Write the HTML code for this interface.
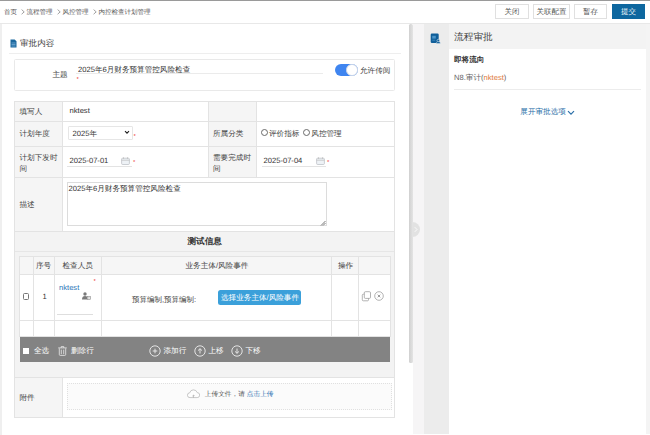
<!DOCTYPE html>
<html><head><meta charset="utf-8">
<style>
*{box-sizing:border-box;margin:0;padding:0}
html,body{width:650px;height:435px;overflow:hidden;background:#fff;font-family:"Liberation Sans",sans-serif;color:#333;text-rendering:geometricPrecision}
.a{position:absolute}
.t{position:absolute;white-space:nowrap;line-height:1}
</style></head><body>
<!-- top line -->
<div class="a" style="left:0;top:0;width:650px;height:1px;background:#9a9a9a"></div>
<!-- header -->
<div class="a" style="left:0;top:1px;width:650px;height:23px;background:#fff;border-bottom:1px solid #e8e8e8"></div>
<div class="t" style="left:4px;top:9.6px;font-size:6.5px;color:#555">首页</div>
<svg class="a" style="left:20.5px;top:9px" width="4" height="6" viewBox="0 0 4 6"><path d="M0.6 0.6L3.2 2.9L0.6 5.2" stroke="#8a8a8a" stroke-width="0.8" fill="none"/></svg>
<div class="t" style="left:26.5px;top:9.6px;font-size:6.5px;color:#555">流程管理</div>
<svg class="a" style="left:56.5px;top:9px" width="4" height="6" viewBox="0 0 4 6"><path d="M0.6 0.6L3.2 2.9L0.6 5.2" stroke="#8a8a8a" stroke-width="0.8" fill="none"/></svg>
<div class="t" style="left:62.5px;top:9.6px;font-size:6.5px;color:#555">风控管理</div>
<svg class="a" style="left:92.5px;top:9px" width="4" height="6" viewBox="0 0 4 6"><path d="M0.6 0.6L3.2 2.9L0.6 5.2" stroke="#8a8a8a" stroke-width="0.8" fill="none"/></svg>
<div class="t" style="left:98.5px;top:9.6px;font-size:6.5px;color:#555">内控检查计划管理</div>
<div class="a btn" style="left:495px;top:4px;width:34px;height:15px;border:1px solid #e0e0e0;font-size:7.5px;color:#555;text-align:center;line-height:13px">关闭</div>
<div class="a btn" style="left:533px;top:4px;width:37px;height:15px;border:1px solid #e0e0e0;font-size:7.5px;color:#555;text-align:center;line-height:13px">关联配置</div>
<div class="a btn" style="left:574px;top:4px;width:33px;height:15px;border:1px solid #e0e0e0;font-size:7.5px;color:#555;text-align:center;line-height:13px">暂存</div>
<div class="a btn" style="left:612px;top:4px;width:33px;height:15px;background:#0e679f;font-size:7.5px;color:#fff;text-align:center;line-height:15px">提交</div>

<!-- left strip -->
<div class="a" style="left:0;top:24px;width:1.6px;height:411px;background:#efefef"></div>
<!-- scrollbar area -->
<div class="a" style="left:409px;top:24px;width:3.5px;height:339px;border-radius:1.5px;background:linear-gradient(90deg,#d0d0d0,#e4e4e4)"></div>
<div class="a" style="left:412.8px;top:24px;width:11.2px;height:410px;background:#f6f5f6"></div>
<div class="a" style="left:424px;top:24px;width:25px;height:410px;background:#ececec"></div>
<div class="a" style="left:646px;top:24px;width:4px;height:410px;background:#f4f4f4"></div>

<!-- section title -->
<svg class="a" style="left:10px;top:38.5px" width="7" height="9" viewBox="0 0 7 9"><path d="M0.5 0.5h4.2l1.8 1.8v6.2h-6z" fill="#1b689e"/><path d="M1.5 4h4M1.5 5.5h4M1.5 7h4" stroke="#7fb6dc" stroke-width="0.7"/></svg>
<div class="t" style="left:20px;top:38.5px;font-size:8.6px;color:#444">审批内容</div>
<div class="a" style="left:9px;top:53px;width:392px;height:1px;background:#eeeeee"></div>

<!-- subject box -->
<div class="a" style="left:14px;top:59px;width:381px;height:32px;border:1px solid #e9e9e9;border-radius:1.5px"></div>
<div class="t" style="left:52.5px;top:70.5px;font-size:7.6px;color:#444">主题</div>
<div class="t" style="left:78px;top:65.7px;font-size:7.6px;color:#333">2025年6月财务预算管控风险检查</div>
<div class="a" style="left:75.5px;top:73px;width:247px;height:1px;background:#ebebeb"></div>
<div class="t" style="left:76.5px;top:77px;font-size:6px;color:#e33">*</div>
<div class="a" style="left:335px;top:64px;width:23px;height:12px;border-radius:6px;background:#3f85f0"></div>
<div class="a" style="left:346px;top:64.3px;width:11.5px;height:11.5px;border-radius:50%;background:#fff;border:0.5px solid #cfd8e8"></div>
<div class="t" style="left:360px;top:66.8px;font-size:7.6px;color:#444">允许传阅</div>

<!-- main table -->
<div class="a" style="left:14px;top:101px;width:381px;height:317px;border:1px solid #e3e3e3;background:#fff"></div>
<div class="a" style="left:15px;top:102px;width:47.5px;height:129px;background:#f5f5f5"></div>
<div class="a" style="left:208px;top:102px;width:48.5px;height:75px;background:#f5f5f5"></div>
<div class="a" style="left:62px;top:101px;width:1px;height:130px;background:#e3e3e3"></div>
<div class="a" style="left:208px;top:101px;width:1px;height:76px;background:#e3e3e3"></div>
<div class="a" style="left:256px;top:101px;width:1px;height:76px;background:#e3e3e3"></div>
<div class="a" style="left:14px;top:121px;width:381px;height:1px;background:#e3e3e3"></div>
<div class="a" style="left:14px;top:145.5px;width:381px;height:1px;background:#e3e3e3"></div>
<div class="a" style="left:14px;top:177px;width:381px;height:1px;background:#e3e3e3"></div>
<div class="a" style="left:14px;top:230.5px;width:381px;height:1px;background:#e3e3e3"></div>
<div class="t" style="left:19.5px;top:107.6px;font-size:7.6px;color:#444">填写人</div>
<div class="t" style="left:69.5px;top:107px;font-size:7.6px;color:#333">nktest</div>
<div class="t" style="left:19.5px;top:130.3px;font-size:7.6px;color:#444">计划年度</div>
<div class="a" style="left:67.5px;top:126.2px;width:65px;height:13.4px;border:1px solid #e6e6e6;border-radius:1px"></div>
<div class="t" style="left:72.5px;top:129.5px;font-size:7.6px;color:#333">2025年</div>
<svg class="a" style="left:123.5px;top:130px" width="6" height="5" viewBox="0 0 6 5"><path d="M1 1.2L3 3.2L5 1.2" stroke="#222" stroke-width="1.1" fill="none"/></svg>
<div class="t" style="left:133.5px;top:133.5px;font-size:6px;color:#e33">*</div>
<div class="t" style="left:213px;top:129.7px;font-size:7.6px;color:#444">所属分类</div>
<div class="a" style="left:261px;top:128.8px;width:7px;height:7px;border:0.7px solid #6a6a6a;border-radius:50%"></div>
<div class="t" style="left:269px;top:129.7px;font-size:7.6px;color:#444">评价指标</div>
<div class="a" style="left:303px;top:128.8px;width:7px;height:7px;border:0.7px solid #6a6a6a;border-radius:50%"></div>
<div class="t" style="left:311.3px;top:129.7px;font-size:7.6px;color:#444">风控管理</div>

<div class="t" style="left:19.5px;top:151.5px;font-size:7.6px;color:#444;line-height:11px;white-space:normal;width:42px">计划下发时间</div>
<div class="t" style="left:69.5px;top:156.5px;font-size:7.6px;color:#333">2025-07-01</div>
<div class="a" style="left:67px;top:165.5px;width:65px;height:1px;background:#e3e3e3"></div>
<div class="t" style="left:133px;top:160px;font-size:6px;color:#e33">*</div>
<div class="t" style="left:213px;top:151.5px;font-size:7.6px;color:#444;line-height:11px;white-space:normal;width:42px">需要完成时间</div>
<div class="t" style="left:263.5px;top:156.5px;font-size:7.6px;color:#333">2025-07-04</div>
<div class="a" style="left:261.5px;top:165.5px;width:64.5px;height:1px;background:#e3e3e3"></div>
<div class="t" style="left:327px;top:160px;font-size:6px;color:#e33">*</div>

<div class="t" style="left:19.5px;top:201px;font-size:7.6px;color:#444">描述</div>
<div class="a" style="left:67px;top:182.3px;width:260px;height:44px;border:1px solid #dcdcdc"></div>
<div class="t" style="left:68.5px;top:185px;font-size:7.6px;color:#333">2025年6月财务预算管控风险检查</div>


<svg class="a" style="left:121px;top:157px" width="9" height="8" viewBox="0 0 9 8"><rect x="0.6" y="1.2" width="7.8" height="6.3" rx="1" fill="#eef2f6" stroke="#b8bcc2" stroke-width="0.7"/><path d="M0.6 3.2h7.8M2.5 0.2v1.8M6.5 0.2v1.8" stroke="#bbb" stroke-width="0.7"/></svg>
<svg class="a" style="left:315.5px;top:157px" width="9" height="8" viewBox="0 0 9 8"><rect x="0.6" y="1.2" width="7.8" height="6.3" rx="1" fill="#eef2f6" stroke="#b8bcc2" stroke-width="0.7"/><path d="M0.6 3.2h7.8M2.5 0.2v1.8M6.5 0.2v1.8" stroke="#bbb" stroke-width="0.7"/></svg>
<svg class="a" style="left:320px;top:220px" width="6" height="6" viewBox="0 0 6 6"><path d="M1 5.5L5.5 1M3 5.5L5.5 3" stroke="#555" stroke-width="0.8"/></svg>
<!-- test info section -->
<div class="a" style="left:15px;top:231.5px;width:379px;height:146px;background:#f3f3f3"></div>
<div class="a" style="left:15px;top:251px;width:379px;height:1px;background:#e6e6e6"></div>
<div class="t" style="left:187.5px;top:237px;font-size:8.6px;color:#333;font-weight:bold">测试信息</div>
<div class="a" style="left:14px;top:377px;width:381px;height:1px;background:#e3e3e3"></div>

<!-- inner table -->
<div class="a" style="left:19px;top:256px;width:371.5px;height:81px;background:#fff;border:1px solid #e3e3e3"></div>
<div class="a" style="left:20px;top:257px;width:369.5px;height:17.3px;background:#f6f6f6"></div>
<div class="a" style="left:19px;top:274px;width:371.5px;height:1px;background:#e3e3e3"></div>
<div class="a" style="left:19px;top:320px;width:371.5px;height:1px;background:#e3e3e3"></div>
<div class="a" style="left:33px;top:256px;width:1px;height:81px;background:#e3e3e3"></div>
<div class="a" style="left:54px;top:256px;width:1px;height:81px;background:#e3e3e3"></div>
<div class="a" style="left:101px;top:256px;width:1px;height:81px;background:#e3e3e3"></div>
<div class="a" style="left:331px;top:256px;width:1px;height:81px;background:#e3e3e3"></div>
<div class="a" style="left:358px;top:256px;width:1px;height:81px;background:#e3e3e3"></div>
<div class="t" style="left:36px;top:262px;font-size:7.6px;color:#444">序号</div>
<div class="t" style="left:62.5px;top:262px;font-size:7.6px;color:#444">检查人员</div>
<div class="t" style="left:185.5px;top:262px;font-size:7.6px;color:#444">业务主体/风险事件</div>
<div class="t" style="left:338px;top:262px;font-size:7.6px;color:#444">操作</div>
<div class="a" style="left:22.5px;top:293px;width:6.5px;height:7px;border:0.8px solid #777;border-radius:1.5px;background:#fff"></div>
<div class="t" style="left:42.5px;top:293px;font-size:7.6px;color:#333">1</div>
<div class="t" style="left:59px;top:283.8px;font-size:7.6px;color:#2b75b8">nktest</div>
<div class="t" style="left:93.5px;top:278.5px;font-size:6px;color:#e33">*</div>
<svg class="a" style="left:82px;top:292px" width="9" height="8" viewBox="0 0 9 8"><circle cx="3" cy="2" r="1.7" fill="#7a7a7a"/><path d="M0 7.5c0-2.5 1.2-3.6 3-3.6s3 1.1 3 3.6z" fill="#7a7a7a"/><rect x="5.2" y="4.3" width="3.3" height="3.2" fill="#fff" stroke="#888" stroke-width="0.6"/><path d="M6.85 4.3v3.2M5.2 5.9h3.3" stroke="#aaa" stroke-width="0.4"/></svg>
<div class="a" style="left:57px;top:313.5px;width:36px;height:1px;background:#dedede"></div>
<div class="t" style="left:132px;top:295.5px;font-size:7.5px;color:#444">预算编制,预算编制:</div>
<div class="a" style="left:218.3px;top:290px;width:82.5px;height:15px;border-radius:2.5px;background:#3ba0da"></div>
<div class="t" style="left:221px;top:293.5px;font-size:7.6px;color:#fff">选择业务主体/风险事件</div>
<svg class="a" style="left:361px;top:290.5px" width="11" height="11" viewBox="0 0 11 11"><rect x="3.3" y="0.7" width="6.2" height="6.7" rx="1.1" fill="none" stroke="#9a9a9a" stroke-width="0.75"/><path d="M3.3 3.2H2.3a1 1 0 0 0-1 1v4.6a1 1 0 0 0 1 1h4.2a1 1 0 0 0 1-1V7.4" fill="none" stroke="#9a9a9a" stroke-width="0.75"/></svg>
<svg class="a" style="left:374.2px;top:290.6px" width="10" height="10" viewBox="0 0 10 10"><circle cx="5" cy="5" r="4.3" fill="none" stroke="#9a9a9a" stroke-width="0.75"/><path d="M3.7 3.7l2.6 2.6M6.3 3.7l-2.6 2.6" stroke="#8a8a8a" stroke-width="0.85"/></svg>

<!-- toolbar -->
<div class="a" style="left:19.5px;top:337px;width:370.5px;height:24.5px;background:#838383"></div>
<div class="a" style="left:23px;top:348px;width:6px;height:6px;background:#fff"></div>
<div class="t" style="left:34px;top:346.5px;font-size:7.6px;color:#fff">全选</div>
<svg class="a" style="left:58px;top:345.6px" width="9" height="10" viewBox="0 0 9 10"><path d="M0.2 1.9h8.6M3.2 1.9V0.6h2.6v1.3M1.3 2.3v6.2a0.9 0.9 0 0 0 0.9 0.9h4.6a0.9 0.9 0 0 0 0.9-0.9V2.3M3.3 3.6v4.6M5.7 3.6v4.6" fill="none" stroke="#f0f0f0" stroke-width="0.75"/></svg>
<div class="t" style="left:71px;top:346.5px;font-size:7.6px;color:#fff">删除行</div>
<svg class="a" style="left:148.5px;top:344.5px" width="12" height="12" viewBox="0 0 12 12"><circle cx="6" cy="6" r="5.2" fill="none" stroke="#eee" stroke-width="0.9"/><path d="M6 3.7v4.6M3.7 6h4.6" stroke="#eee" stroke-width="0.9"/></svg>
<div class="t" style="left:163.5px;top:346.5px;font-size:7.6px;color:#fff">添加行</div>
<svg class="a" style="left:193.5px;top:344.5px" width="12" height="12" viewBox="0 0 12 12"><circle cx="6" cy="6" r="5.2" fill="none" stroke="#eee" stroke-width="0.9"/><path d="M6 8.5V3.7M4 5.6L6 3.7l2 1.9" fill="none" stroke="#eee" stroke-width="0.9"/></svg>
<div class="t" style="left:208.5px;top:346.5px;font-size:7.6px;color:#fff">上移</div>
<svg class="a" style="left:231px;top:344.5px" width="12" height="12" viewBox="0 0 12 12"><circle cx="6" cy="6" r="5.2" fill="none" stroke="#eee" stroke-width="0.9"/><path d="M6 3.5v4.8M4 6.4L6 8.3l2-1.9" fill="none" stroke="#eee" stroke-width="0.9"/></svg>
<div class="t" style="left:245.5px;top:346.5px;font-size:7.6px;color:#fff">下移</div>

<!-- attachments -->
<div class="a" style="left:15px;top:378px;width:47.5px;height:39px;background:#f5f5f5"></div>
<div class="a" style="left:62px;top:377px;width:1px;height:41px;background:#e3e3e3"></div>
<div class="t" style="left:19.5px;top:394.2px;font-size:7.6px;color:#444">附件</div>
<div class="a" style="left:67px;top:382.5px;width:324.5px;height:27px;border:1px dotted #e0e0e0;background:#fbfbfb"></div>
<svg class="a" style="left:186.5px;top:389px" width="13" height="10" viewBox="0 0 13 10"><path d="M3 8.6a2.4 2.4 0 0 1-.3-4.8A3.9 3.9 0 0 1 10.2 3.6a2.5 2.5 0 0 1 0 5z" fill="#fdfdfd" stroke="#b5b5b5" stroke-width="0.75"/><path d="M6.5 8.6V6.2M5.4 7.1l1.1-1.1l1.1 1.1" fill="none" stroke="#aaa" stroke-width="0.7"/></svg>
<div class="t" style="left:204.8px;top:392.4px;font-size:6.7px;color:#555">上传文件，请 <span style="color:#2a6fb0">点击上传</span></div>

<!-- collapse handle -->
<div class="a" style="left:412px;top:222px;width:8px;height:15px;border-radius:0 8px 8px 0;background:#e2e2e2"></div>
<svg class="a" style="left:413px;top:226px" width="6" height="7" viewBox="0 0 6 7"><path d="M1.8 1.2L4 3.5L1.8 5.8" stroke="#fff" stroke-width="0.8" fill="none"/></svg>

<!-- right panel -->
<div class="a" style="left:449px;top:24px;width:197px;height:24.5px;background:#f3f3f3"></div>
<svg class="a" style="left:430.3px;top:33.4px" width="11" height="11" viewBox="0 0 11 11"><rect x="0.7" y="0.6" width="8" height="9.4" rx="1.2" fill="#105f9a"/><path d="M2.2 2.8h3.6v2.8H2.2z" fill="#4d95c9"/><path d="M2.2 7.2h3" stroke="#4d95c9" stroke-width="0.7"/><circle cx="8.3" cy="7.6" r="1.3" fill="#105f9a" stroke="#fff" stroke-width="0.5"/><path d="M6.2 10.6c0-1.6 1-2 2.1-2s2.1.4 2.1 2z" fill="#105f9a" stroke="#fff" stroke-width="0.4"/></svg>
<div class="t" style="left:454px;top:32.7px;font-size:9.7px;color:#444">流程审批</div>
<div class="t" style="left:454px;top:56.3px;font-size:7.6px;color:#333;font-weight:bold">即将流向</div>
<div class="t" style="left:454px;top:73.5px;font-size:7.6px;color:#666">N8.审计(<span style="color:#e07a3c">nktest</span>)</div>
<div class="a" style="left:454px;top:89px;width:187px;height:1px;background:#ececec"></div>
<div class="t" style="left:520.3px;top:108px;font-size:7.6px;color:#2a6fa8">展开审批选项</div>
<svg class="a" style="left:567px;top:109.5px" width="8" height="6" viewBox="0 0 8 6"><path d="M1 1.2L4 4.2L7 1.2" stroke="#2a6fa8" stroke-width="1.2" fill="none"/></svg>
</body></html>
